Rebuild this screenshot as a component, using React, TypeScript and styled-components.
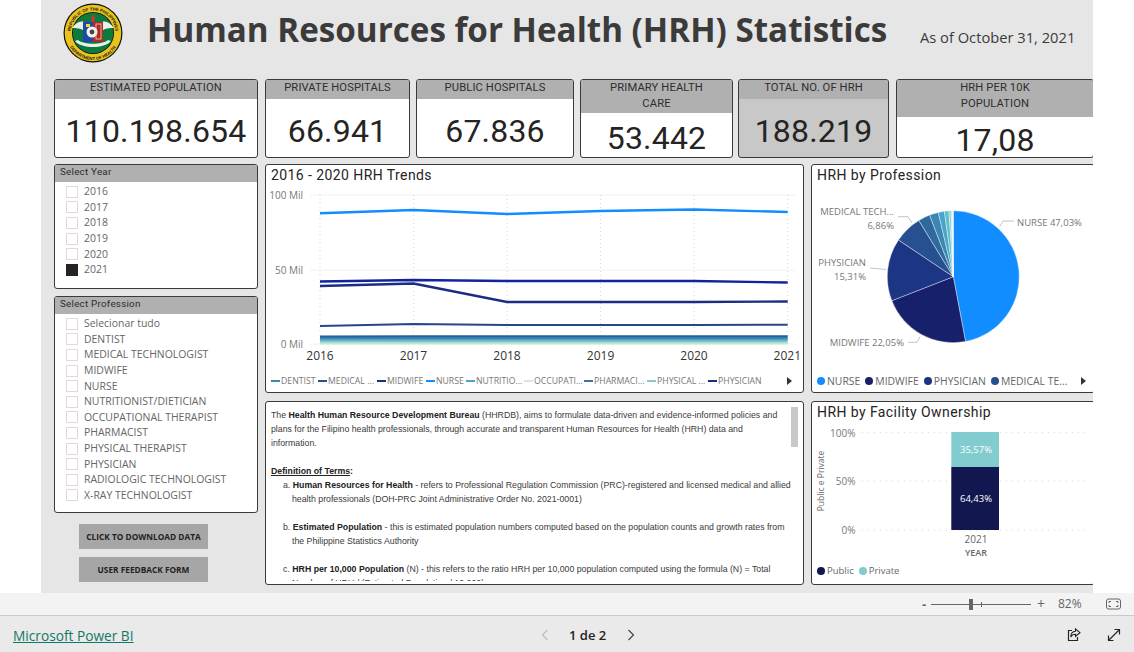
import React from "react";
import styled, { createGlobalStyle } from "styled-components";

const Global = createGlobalStyle`
  html, body { margin: 0; padding: 0; background: #fff; }
  body { width: 1134px; height: 652px; overflow: hidden; font-family: "Open Sans", sans-serif; }
  * { box-sizing: border-box; }
`;

const DIN = `Roboto, "Liberation Sans", sans-serif`;
const SEGOE = `"Open Sans", "Noto Sans", sans-serif`;

const Page = styled.div`
  width: 1134px; height: 652px; display: flex; flex-direction: column; background: #fff;
`;
const Canvas = styled.main`
  width: 1052px; height: 593px; margin-left: 41px; background: #e6e6e6; overflow: hidden;
  padding-left: 13px; display: flex; flex-direction: column;
`;
const Header = styled.header`
  height: 79px; display: flex; align-items: flex-start; flex: none;
`;
const LogoWrap = styled.div`
  margin: 3px 0 0 9px; width: 60px; height: 60px; flex: none;
`;
const Title = styled.h1`
  margin: 7px 0 0 24px; font: 700 33.2px/46px ${SEGOE}; color: #3b3b3b; white-space: nowrap; width: 773px;
`;
const DateText = styled.div`
  margin-top: 26px; font: 400 14.7px/22px ${SEGOE}; color: #3b3b3b; white-space: nowrap;
`;
const KpiRow = styled.section`
  height: 79px; display: flex; flex: none; width: 1042px;
`;
const Kpi = styled.article<{ $w: number; $ml: number; $dim?: boolean }>`
  width: ${(p) => p.$w}px; margin-left: ${(p) => p.$ml}px; flex: none; height: 79px;
  display: flex; flex-direction: column; overflow: hidden;
  border: 1px solid #3a3a3a; border-radius: 3px; background: ${(p) => (p.$dim ? "#c8c8c8" : "#fff")};
`;
const KpiHead = styled.div<{ $h: number; $px: number }>`
  height: ${(p) => p.$h}px; flex: none; background: #b0b0b0; color: #2e2e2e;
  font: 400 11.2px/16px ${DIN}; text-align: center; padding: 0 ${(p) => p.$px}px; letter-spacing: 0.12px;
`;
const KpiValue = styled.div`
  flex: 1; display: flex; align-items: center; justify-content: center; padding-top: 5px;
  font: 400 32px/36px ${DIN}; color: #252423; letter-spacing: 0.2px;
`;
const Body = styled.section`
  margin-top: 6px; display: flex; gap: 7px; flex: none; width: 1042px;
`;
const LeftCol = styled.div`
  width: 204px; flex: none; display: flex; flex-direction: column;
`;
const Slicer = styled.div<{ $h: number; $mb: number }>`
  height: ${(p) => p.$h}px; margin-bottom: ${(p) => p.$mb}px; background: #fff;
  border: 1px solid #3a3a3a; border-radius: 3px; overflow: hidden;
`;
const SlicerHead = styled.div`
  height: 17px; background: #b0b0b0; color: #2e2e2e; padding-left: 5px;
  font: 400 9.8px/14px ${DIN}; letter-spacing: 0.25px; margin-bottom: 2px;
`;
const SlicerRow = styled.div`
  height: 15.6px; display: flex; align-items: center; padding-left: 11px;
  font: 400 10.45px/15px ${SEGOE}; color: #666; white-space: nowrap;
`;
const Check = styled.span<{ $on?: boolean }>`
  width: 12px; height: 12px; margin-right: 6px; flex: none;
  border: 1px solid ${(p) => (p.$on ? "#252423" : "#e3d9d9")};
  background: ${(p) => (p.$on ? "#252423" : "#fff")};
`;
const GreyButton = styled.button<{ $mt: number }>`
  width: 129px; height: 25px; margin: ${(p) => p.$mt}px 0 0 25px; border: 0; padding: 0;
  background: #a6a6a6; color: #222; font: 700 8.3px/25px ${SEGOE}; text-align: center;
`;
const MidCol = styled.div`
  width: 539px; flex: none; display: flex; flex-direction: column; gap: 8px;
`;
const RightCol = styled.div`
  width: 284px; flex: none; display: flex; flex-direction: column; gap: 8px;
`;
const Panel = styled.div<{ $h: number }>`
  height: ${(p) => p.$h}px; background: #fff; border: 1px solid #3a3a3a; border-radius: 3px;
  overflow: hidden; position: relative; display: flex; flex-direction: column;
`;
const PanelTitle = styled.h2<{ $h: number }>`
  margin: 0; height: ${(p) => p.$h}px; flex: none; padding: 1px 0 0 5px;
  font: 400 14px/18px ${DIN}; letter-spacing: 0.42px; color: #252423;
`;
const Chart = styled.svg`
  display: block; flex: none;
`;
const Legend = styled.div<{ $pad: number }>`
  display: flex; align-items: center; padding-left: ${(p) => p.$pad}px; flex: 1; white-space: nowrap;
`;
const LineItem = styled.span<{ $w: number }>`
  width: ${(p) => p.$w}px; flex: none; display: flex; align-items: center; gap: 1px;
  font: 400 8.7px/12px ${SEGOE}; color: #777;
`;
const Dash = styled.i<{ $c: string }>`
  width: 9px; height: 2px; background: ${(p) => p.$c}; flex: none;
`;
const DotItem = styled.span<{ $size: number; $gap: number }>`
  display: flex; align-items: center; gap: 2px; margin-right: ${(p) => p.$gap}px;
  font: 400 ${(p) => p.$size}px/14px ${SEGOE}; color: #666;
`;
const Dot = styled.i<{ $c: string }>`
  width: 8px; height: 8px; border-radius: 50%; background: ${(p) => p.$c}; flex: none;
`;
const Caret = styled.i`
  width: 0; height: 0; border-left: 5px solid #333; border-top: 4px solid transparent; border-bottom: 4px solid transparent;
  flex: none;
`;
const Prose = styled.div`
  height: 179px; overflow: hidden;
  padding: 6px 0 0 5px; font: 400 8.76px/14.05px "Liberation Sans", Arial, sans-serif; color: #3a3a3a; white-space: nowrap;
  strong { color: #222; }
`;
const ProseHead = styled.div`
  margin-top: 14px; font-weight: 700; color: #222;
  span { text-decoration: underline; }
`;
const Term = styled.div<{ $mt: number }>`
  margin-top: ${(p) => p.$mt}px; padding-left: 21px; text-indent: -9px;
`;
const ScrollThumb = styled.div`
  position: absolute; top: 5px; right: 5px; width: 7px; height: 40px; background: #c8c8c8;
`;
const ZoomBar = styled.div`
  height: 23px; flex: none; background: #f3f3f3; border-bottom: 1px solid #c9c9c9;
  display: flex; align-items: center; padding-left: 922px; position: relative;
  color: #666; font: 400 12px/16px ${SEGOE};
`;
const ZoomMinus = styled.span`
  width: 9px; font-weight: 700; font-size: 13px;
`;
const Track = styled.div`
  width: 100px; height: 1px; background: #666; position: relative; flex: none;
`;
const Thumb = styled.i`
  position: absolute; left: 38px; top: -5px; width: 4px; height: 11px; background: #666;
`;
const Tick = styled.i`
  position: absolute; left: 50px; top: -2px; width: 1px; height: 5px; background: #666;
`;
const ZoomPlus = styled.span`
  margin-left: 6px; width: 21px; font-size: 14px;
`;
const Footer = styled.footer`
  flex: 1; background: #eaeaea; display: flex; align-items: center; padding: 3px 13px 0 13px;
`;
const BrandLink = styled.a`
  width: 528px; flex: none; font: 400 13.7px/20px ${SEGOE}; color: #117865; text-decoration: underline;
`;
const Pager = styled.div`
  display: flex; align-items: center; font: 600 13px/18px ${SEGOE}; color: #252423;
  margin-top: -2px;
  span { margin: 0 21px 0 20px; }
`;
const FootIcons = styled.div`
  margin-left: auto; display: flex; align-items: center; gap: 26px; margin-top: -2px;
`;
const T = styled.text<{ $s?: number; $c?: string; $w?: number }>`
  font-family: ${SEGOE}; font-size: ${(p) => p.$s ?? 9.5}px; fill: ${(p) => p.$c ?? "#777"};
  font-weight: ${(p) => p.$w ?? 400};
`;

const Logo = () => (
  <svg width="60" height="60" viewBox="0 0 60 60">
    <defs>
      <path id="topArc" d="M9.6 39.5A22.5 22.5 0 1 1 50.4 39.5" />
      <path id="botArc" d="M4.6 39.2A27 27 0 0 0 55.4 39.2" />
    </defs>
    <circle cx="30" cy="30" r="29.5" fill="#0d0d0d" />
    <circle cx="30" cy="30" r="28.3" fill="#e8c31e" />
    <circle cx="30" cy="30" r="21" fill="#0d0d0d" />
    <circle cx="30" cy="30" r="20.2" fill="#0c7a3e" />
    <text fontFamily="Liberation Sans, sans-serif" fontSize="4.3" fontWeight="700" fill="#161616">
      <textPath href="#topArc" startOffset="50%" textAnchor="middle">REPUBLIC OF THE PHILIPPINES</textPath>
    </text>
    <text fontFamily="Liberation Sans, sans-serif" fontSize="4.3" fontWeight="700" fill="#161616">
      <textPath href="#botArc" startOffset="50%" textAnchor="middle">DEPARTMENT OF HEALTH</textPath>
    </text>
    <path d="M9 25c4-6 10-8 13-5l-1 8c-3-3-8-3-12-3zM51 25c-4-6-10-8-13-5l1 8c3-3 8-3 12-3z" fill="#e9efe9" />
    <path d="M12 38c7 8 29 8 36 0l-3-1c-6 5-24 5-30 0z" fill="#e9efe9" />
    <rect x="20" y="19" width="20" height="20" fill="#b02a2a" />
    <rect x="20" y="19" width="10" height="20" fill="#1f49a8" />
    <rect x="23" y="21" width="4" height="3" fill="#f1d64a" />
    <circle cx="29" cy="29" r="5.5" fill="#f4f4f4" />
    <circle cx="29" cy="29" r="2.4" fill="#444" />
    <path d="M30 11l2 4 -1 4h-2l-1-4z" fill="#c7392b" />
    <rect x="33" y="21" width="5" height="15" fill="none" stroke="#e8d9a0" strokeWidth="0.8" />
  </svg>
);

const XS = [320, 413.5, 507, 600.6, 694, 787.7];
const pts = (ys: number[]) => ys.map((y, i) => `${XS[i]},${y}`).join(" ");
const LINES: { c: string; w: number; y: number[] }[] = [
  { c: "#dcefe0", w: 2, y: [344, 344, 344, 344, 344, 344] },
  { c: "#a8dcd0", w: 2, y: [342.6, 342.6, 342.6, 342.6, 342.6, 342.6] },
  { c: "#7cc6cf", w: 2, y: [341, 341, 341, 341, 341, 341] },
  { c: "#4aa3c9", w: 2, y: [339.5, 339.5, 339.5, 339.5, 339.5, 339.5] },
  { c: "#3a86b4", w: 2, y: [338, 338, 338, 338, 338, 338] },
  { c: "#2b5f95", w: 2, y: [336.4, 336.2, 336.2, 336.2, 336.2, 336.2] },
  { c: "#24478f", w: 2, y: [326, 324, 325, 325, 325, 324.8] },
  { c: "#1c2c82", w: 2.4, y: [286, 283.5, 302, 302, 302, 301.5] },
  { c: "#12239e", w: 2.4, y: [281.5, 280, 281, 281, 281, 282.5] },
  { c: "#118dff", w: 2.4, y: [213.3, 210, 214, 211, 209.5, 212] },
];

const TrendChart = () => (
  <Chart width="537" height="180" viewBox="266 189 537 180">
    {[195, 270, 344].map((y) => (
      <line key={y} x1="310" x2="795" y1={y} y2={y} stroke="#f1f1f1" />
    ))}
    {XS.map((x) => (
      <line key={x} x1={x} x2={x} y1="195" y2="344" stroke="#d8d8d8" strokeDasharray="1 3" />
    ))}
    {LINES.map((l) => (
      <polyline key={l.c} points={pts(l.y)} fill="none" stroke={l.c} strokeWidth={l.w} />
    ))}
    {[["100 Mil", 199], ["50 Mil", 273.5], ["0 Mil", 348]].map(([t, y]) => (
      <T key={t as string} x="303" y={y as number} textAnchor="end" $s={10}>{t}</T>
    ))}
    {[2016, 2017, 2018, 2019, 2020].map((t, i) => (
      <T key={t} x={XS[i]} y="360" textAnchor="middle" $s={12} $c="#333">{t}</T>
    ))}
    <T x="801" y="360" textAnchor="end" $s={12} $c="#333">2021</T>
  </Chart>
);

const LINE_LEGEND = [
  { t: "DENTIST", c: "#3a86b4", w: 47 },
  { t: "MEDICAL ...", c: "#26508f", w: 59 },
  { t: "MIDWIFE", c: "#1c2c82", w: 49 },
  { t: "NURSE", c: "#118dff", w: 40 },
  { t: "NUTRITIO...", c: "#4aa3c9", w: 58 },
  { t: "OCCUPATI...", c: "#d6e8d2", w: 60 },
  { t: "PHARMACI...", c: "#3d74a8", w: 63 },
  { t: "PHYSICAL ...", c: "#86cbc8", w: 61 },
  { t: "PHYSICIAN", c: "#1c2c82", w: 79 },
];

const PIE = [
  [47.03, "#118dff"], [22.05, "#17206b"], [15.31, "#1c3585"], [6.86, "#26508f"],
  [2.9, "#2f6a9f"], [2.2, "#3a86b4"], [1.5, "#4aa3c9"], [1.1, "#5dbfd0"],
  [0.5, "#86cbc8"], [0.3, "#bde0d0"], [0.25, "#e0efe0"],
] as [number, string][];
const CX = 953.3, CY = 276.7, R = 66;
function arcs() {
  let a = 0;
  return PIE.map(([p, c]) => {
    const s = (a / 100) * 2 * Math.PI;
    a += p;
    const e = (a / 100) * 2 * Math.PI;
    const d = `M${CX} ${CY}L${CX + R * Math.sin(s)} ${CY - R * Math.cos(s)}A${R} ${R} 0 ${p > 50 ? 1 : 0} 1 ${CX + R * Math.sin(e)} ${CY - R * Math.cos(e)}Z`;
    return <path key={c} d={d} fill={c} stroke="#fff" strokeWidth="0.4" />;
  });
}

const PieChart = () => (
  <Chart width="282" height="180" viewBox="812 189 282 180">
    {arcs()}
    <g fill="none" stroke="#c4c4c4">
      <path d="M999.7 226.7L1003 221H1014" />
      <path d="M898 216.7H908L912 223" />
      <path d="M870 268L886 269.5" />
      <path d="M908 342.3H917L920 336.7" />
    </g>
    <T x="1017" y="225.5">NURSE 47,03%</T>
    <T x="894" y="215" textAnchor="end">MEDICAL TECH...</T>
    <T x="894" y="229" textAnchor="end">6,86%</T>
    <T x="866" y="266" textAnchor="end">PHYSICIAN</T>
    <T x="866" y="280" textAnchor="end">15,31%</T>
    <T x="904" y="345.5" textAnchor="end">MIDWIFE 22,05%</T>
  </Chart>
);

const BarChart = () => (
  <Chart width="282" height="134" viewBox="812 424 282 134">
    {[432.7, 481, 530].map((y) => (
      <line key={y} x1="862" x2="1088" y1={y} y2={y} stroke="#d4d4d4" strokeDasharray="1 5" />
    ))}
    <rect x="951.3" y="432" width="47.7" height="35" fill="#82cccf" />
    <rect x="951.3" y="467" width="47.7" height="63" fill="#12174f" />
    <T x="976" y="453" textAnchor="middle" $c="#fff" $s={9.5}>35,57%</T>
    <T x="976" y="502" textAnchor="middle" $c="#fff" $s={9.5}>64,43%</T>
    <T x="855.5" y="436.5" textAnchor="end" $s={10}>100%</T>
    <T x="855.5" y="485" textAnchor="end" $s={10}>50%</T>
    <T x="855.5" y="534" textAnchor="end" $s={10}>0%</T>
    <T x="976" y="543" textAnchor="middle" $s={10} $c="#666">2021</T>
    <T x="976" y="556" textAnchor="middle" $s={9} $c="#666" $w={600}>YEAR</T>
    <T transform="rotate(-90 824 481)" x="824" y="481" textAnchor="middle" $s={8.5} $c="#666">Public e Private</T>
  </Chart>
);

const YEARS = ["2016", "2017", "2018", "2019", "2020", "2021"];
const PROFESSIONS = [
  "Selecionar tudo", "DENTIST", "MEDICAL TECHNOLOGIST", "MIDWIFE", "NURSE", "NUTRITIONIST/DIETICIAN",
  "OCCUPATIONAL THERAPIST", "PHARMACIST", "PHYSICAL THERAPIST", "PHYSICIAN", "RADIOLOGIC TECHNOLOGIST", "X-RAY TECHNOLOGIST",
];

const KPIS = [
  { label: "ESTIMATED POPULATION", value: "110.198.654", w: 204, ml: 0, h: 19, px: 14 },
  { label: "PRIVATE HOSPITALS", value: "66.941", w: 145, ml: 7, h: 19, px: 14 },
  { label: "PUBLIC HOSPITALS", value: "67.836", w: 158, ml: 6, h: 19, px: 14 },
  { label: "PRIMARY HEALTH CARE", value: "53.442", w: 153, ml: 6, h: 33, px: 14 },
  { label: "TOTAL NO. OF HRH", value: "188.219", w: 151, ml: 5, h: 19, px: 14, dim: true },
  { label: "HRH PER 10K POPULATION", value: "17,08", w: 198, ml: 7, h: 37, px: 50 },
];

export default function App() {
  return (
    <Page>
      <Global />
      <Canvas>
        <Header>
          <LogoWrap><Logo /></LogoWrap>
          <Title>Human Resources for Health (HRH) Statistics</Title>
          <DateText>As of October 31, 2021</DateText>
        </Header>
        <KpiRow>
          {KPIS.map((k) => (
            <Kpi key={k.label} $w={k.w} $ml={k.ml} $dim={k.dim}>
              <KpiHead $h={k.h} $px={k.px}>{k.label}</KpiHead>
              <KpiValue>{k.value}</KpiValue>
            </Kpi>
          ))}
        </KpiRow>
        <Body>
          <LeftCol>
            <Slicer $h={125} $mb={7}>
              <SlicerHead>Select Year</SlicerHead>
              {YEARS.map((y) => (
                <SlicerRow key={y}><Check $on={y === "2021"} />{y}</SlicerRow>
              ))}
            </Slicer>
            <Slicer $h={217} $mb={0}>
              <SlicerHead>Select Profession</SlicerHead>
              {PROFESSIONS.map((y) => (
                <SlicerRow key={y}><Check />{y}</SlicerRow>
              ))}
            </Slicer>
            <GreyButton $mt={11}>CLICK TO DOWNLOAD DATA</GreyButton>
            <GreyButton $mt={8}>USER FEEDBACK FORM</GreyButton>
          </LeftCol>
          <MidCol>
            <Panel $h={229}>
              <PanelTitle $h={24}>2016 - 2020 HRH Trends</PanelTitle>
              <TrendChart />
              <Legend $pad={5}>
                {LINE_LEGEND.map((l) => (
                  <LineItem key={l.t} $w={l.w}><Dash $c={l.c} />{l.t}</LineItem>
                ))}
                <Caret />
              </Legend>
            </Panel>
            <Panel $h={184}>
              <Prose>
                The <strong>Health Human Resource Development Bureau</strong> (HHRDB), aims to formulate data-driven and evidence-informed policies and<br />
                plans for the Filipino health professionals, through accurate and transparent Human Resources for Health (HRH) data and<br />
                information.
                <ProseHead><span>Definition of Terms</span>:</ProseHead>
                <Term $mt={0}>a. <strong>Human Resources for Health</strong> - refers to Professional Regulation Commission (PRC)-registered and licensed medical and allied<br />health professionals (DOH-PRC Joint Administrative Order No. 2021-0001)</Term>
                <Term $mt={14}>b. <strong>Estimated Population</strong> - this is estimated population numbers computed based on the population counts and growth rates from<br />the Philippine Statistics Authority</Term>
                <Term $mt={14}>c. <strong>HRH per 10,000 Population</strong> (N) - this refers to the ratio HRH per 10,000 population computed using the formula (N) = Total<br />Number of HRH / (Estimated Population / 10,000)</Term>
              </Prose>
              <ScrollThumb />
            </Panel>
          </MidCol>
          <RightCol>
            <Panel $h={229}>
              <PanelTitle $h={24}>HRH by Profession</PanelTitle>
              <PieChart />
              <Legend $pad={5}>
                <DotItem $size={10.4} $gap={5}><Dot $c="#118dff" />NURSE</DotItem>
                <DotItem $size={10.4} $gap={5}><Dot $c="#17206b" />MIDWIFE</DotItem>
                <DotItem $size={10.4} $gap={5}><Dot $c="#1c3585" />PHYSICIAN</DotItem>
                <DotItem $size={10.4} $gap={14}><Dot $c="#26508f" />MEDICAL TE...</DotItem>
                <Caret />
              </Legend>
            </Panel>
            <Panel $h={184}>
              <PanelTitle $h={22}>HRH by Facility Ownership</PanelTitle>
              <BarChart />
              <Legend $pad={5}>
                <DotItem $size={9.5} $gap={5}><Dot $c="#12174f" />Public</DotItem>
                <DotItem $size={9.5} $gap={5}><Dot $c="#82cccf" />Private</DotItem>
              </Legend>
            </Panel>
          </RightCol>
        </Body>
      </Canvas>
      <ZoomBar>
        <ZoomMinus>-</ZoomMinus>
        <Track><Thumb /><Tick /></Track>
        <ZoomPlus>+</ZoomPlus>
        82%
        <svg width="15" height="12" viewBox="0 0 15 12" style={{ marginLeft: 24 }}>
          <rect x="0.5" y="1" width="14" height="10" rx="2" fill="none" stroke="#666" />
          <path d="M3 5V3.5H5M10 3.5H12V5M12 7V8.5H10M5 8.5H3V7" fill="none" stroke="#666" />
        </svg>
      </ZoomBar>
      <Footer>
        <BrandLink>Microsoft Power BI</BrandLink>
        <Pager>
          <svg width="8" height="12" viewBox="0 0 8 12"><path d="M6.5 1L1.5 6l5 5" fill="none" stroke="#bdbdbd" strokeWidth="1.2" /></svg>
          <span>1 de 2</span>
          <svg width="8" height="12" viewBox="0 0 8 12"><path d="M1.5 1l5 5-5 5" fill="none" stroke="#444" strokeWidth="1.2" /></svg>
        </Pager>
        <FootIcons>
          <svg width="14" height="14" viewBox="0 0 14 14">
            <path d="M5 2.5H1.5v10h9V9" fill="none" stroke="#252423" strokeWidth="1.2" />
            <path d="M8.5 1L13 4.7 8.5 8.3V6.2C6 6.2 4.6 7.2 3.8 9 3.8 5.8 5.6 3.4 8.5 3.2z" fill="none" stroke="#252423" strokeWidth="1.1" />
          </svg>
          <svg width="14" height="14" viewBox="0 0 14 14">
            <path d="M1.5 12.5l11-11M7.5 1.5h5v5M1.5 7.5v5h5" fill="none" stroke="#252423" strokeWidth="1.2" />
          </svg>
        </FootIcons>
      </Footer>
    </Page>
  );
}
